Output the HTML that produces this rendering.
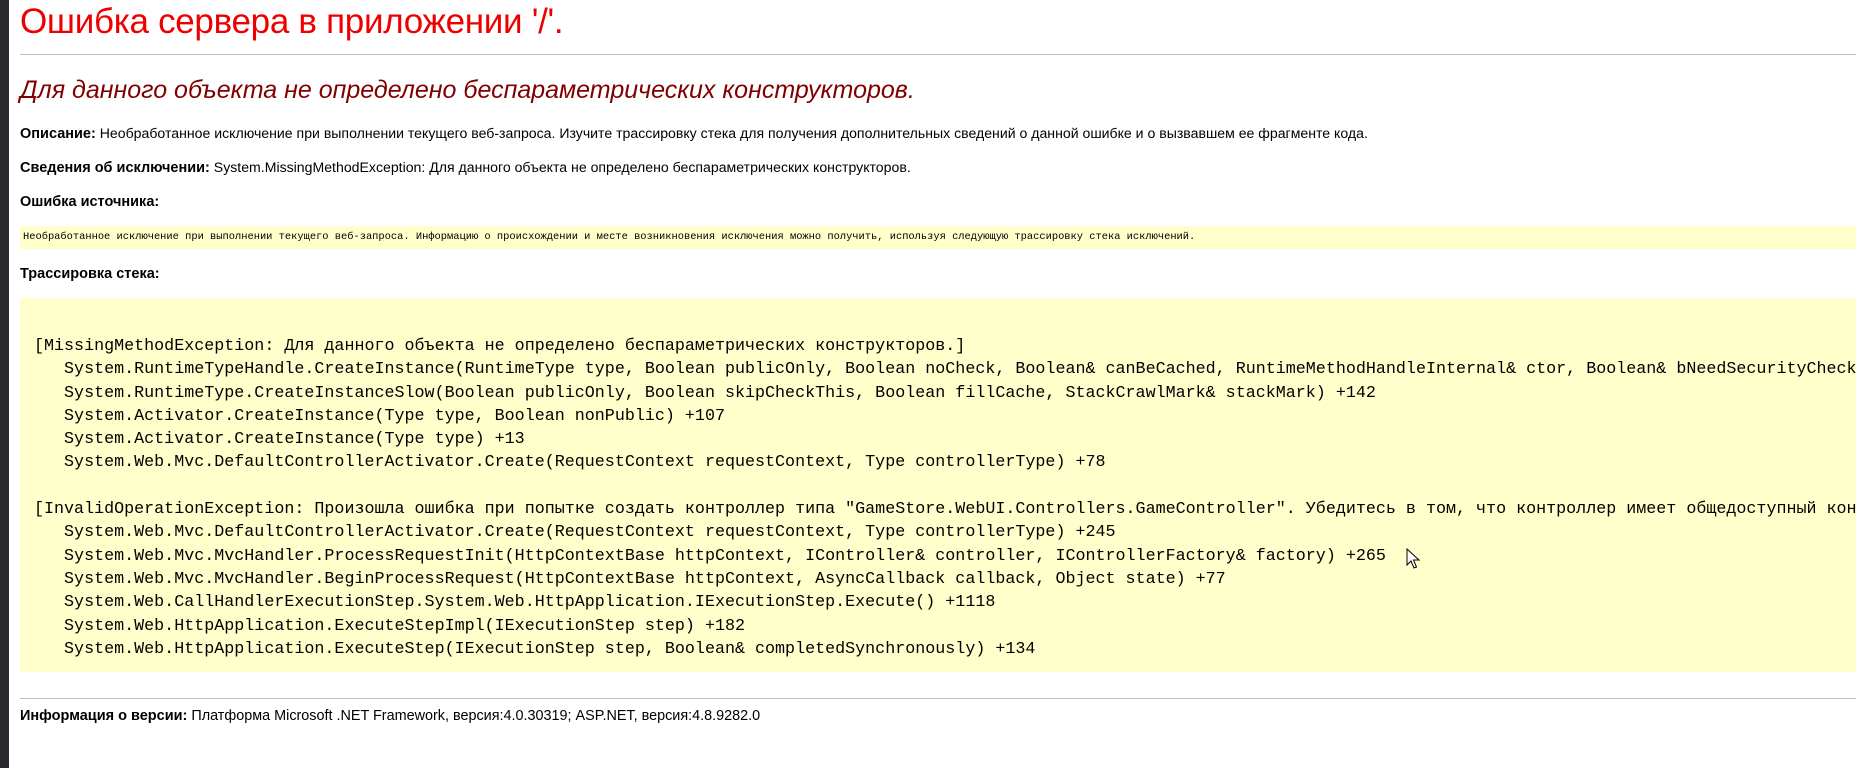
<!DOCTYPE html>
<html><head><meta charset="utf-8"><style>
html,body{margin:0;padding:0;width:1856px;height:768px;overflow:hidden;background:#fff}
.strip{position:absolute;left:0;top:0;width:9px;height:768px;background:#2b2b2f}
.wrap{position:absolute;left:20px;top:0;right:0;font-family:"Liberation Sans",sans-serif;color:#000}
h1{position:absolute;top:1px;left:0;margin:0;font-weight:normal;font-size:35px;line-height:42px;color:#e00;white-space:nowrap;letter-spacing:-0.3px}
.hr{position:absolute;height:1px;background:#c0c0c0;left:0;right:0}
h2{position:absolute;top:75px;left:0;margin:0;font-weight:normal;font-style:italic;font-size:25px;line-height:30px;color:#800000;white-space:nowrap}
.p{position:absolute;left:0;font-size:14.1px;line-height:18px;white-space:nowrap}
.p b{font-size:14.5px}
.y{position:absolute;left:0;right:0;background:#ffffcc;font-family:"Liberation Mono",monospace;white-space:pre;overflow:hidden}
</style></head><body>
<div class="strip"></div>
<div class="wrap">
<h1>Ошибка сервера в приложении '/'.</h1>
<div class="hr" style="top:54px"></div>
<h2>Для данного объекта не определено беспараметрических конструкторов.</h2>
<div class="p" style="top:124px"><b>Описание:</b> Необработанное исключение при выполнении текущего веб-запроса. Изучите трассировку стека для получения дополнительных сведений о данной ошибке и о вызвавшем ее фрагменте кода.</div>
<div class="p" style="top:158px"><b>Сведения об исключении:</b> System.MissingMethodException: Для данного объекта не определено беспараметрических конструкторов.</div>
<div class="p" style="top:192px"><b>Ошибка источника:</b></div>
<div class="y" style="top:226px;height:23px;font-size:10.4px;line-height:23px;padding-left:3px">Необработанное исключение при выполнении текущего веб-запроса. Информацию о происхождении и месте возникновения исключения можно получить, используя следующую трассировку стека исключений.</div>
<div class="p" style="top:264px"><b>Трассировка стека:</b></div>
<div class="y" style="top:298px;height:374px;font-size:16.7px;line-height:23.3px;padding-left:14px;padding-top:37px;box-sizing:border-box">[MissingMethodException: Для данного объекта не определено беспараметрических конструкторов.]
   System.RuntimeTypeHandle.CreateInstance(RuntimeType type, Boolean publicOnly, Boolean noCheck, Boolean&amp; canBeCached, RuntimeMethodHandleInternal&amp; ctor, Boolean&amp; bNeedSecurityCheck) +0
   System.RuntimeType.CreateInstanceSlow(Boolean publicOnly, Boolean skipCheckThis, Boolean fillCache, StackCrawlMark&amp; stackMark) +142
   System.Activator.CreateInstance(Type type, Boolean nonPublic) +107
   System.Activator.CreateInstance(Type type) +13
   System.Web.Mvc.DefaultControllerActivator.Create(RequestContext requestContext, Type controllerType) +78

[InvalidOperationException: Произошла ошибка при попытке создать контроллер типа "GameStore.WebUI.Controllers.GameController". Убедитесь в том, что контроллер имеет общедоступный конструктор без параметров.]
   System.Web.Mvc.DefaultControllerActivator.Create(RequestContext requestContext, Type controllerType) +245
   System.Web.Mvc.MvcHandler.ProcessRequestInit(HttpContextBase httpContext, IController&amp; controller, IControllerFactory&amp; factory) +265
   System.Web.Mvc.MvcHandler.BeginProcessRequest(HttpContextBase httpContext, AsyncCallback callback, Object state) +77
   System.Web.CallHandlerExecutionStep.System.Web.HttpApplication.IExecutionStep.Execute() +1118
   System.Web.HttpApplication.ExecuteStepImpl(IExecutionStep step) +182
   System.Web.HttpApplication.ExecuteStep(IExecutionStep step, Boolean&amp; completedSynchronously) +134</div>
<div class="hr" style="top:698px"></div>
<div class="p" style="top:707px;font-size:14.4px"><b>Информация о версии:</b> Платформа Microsoft .NET Framework, версия:4.0.30319; ASP.NET, версия:4.8.9282.0</div>
</div>
<svg style="position:absolute;left:1406px;top:548px" width="16" height="22" viewBox="0 0 16 22"><path d="M1 1 L1 17 L5 13 L8 20 L10.5 19 L7.5 12 L13 12 Z" fill="#fff" stroke="#000" stroke-width="1"/></svg>
</body></html>
